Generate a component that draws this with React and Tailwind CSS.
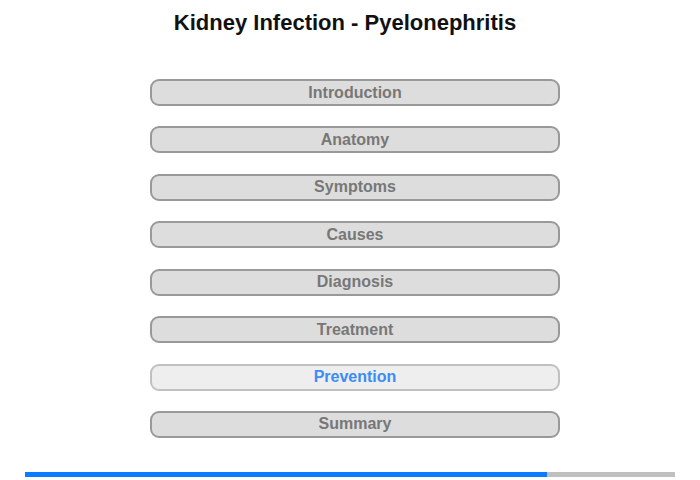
const SECTIONS = [
  'Introduction',
  'Anatomy',
  'Symptoms',
  'Causes',
  'Diagnosis',
  'Treatment',
  'Prevention',
  'Summary',
]

const ACTIVE = 'Prevention'

export default function App() {
  return (
    <div className="w-[700px] h-[480px] bg-white font-['Liberation_Sans',Arial,sans-serif] relative">
      <h1 className="pt-[9px] text-center text-[22px] font-bold text-[#111] leading-[28px] pr-[10px]">
        Kidney Infection - Pyelonephritis
      </h1>

      <div className="mt-[42px] flex flex-col items-center pl-[10px]">
        {SECTIONS.map((s) => {
          const active = s === ACTIVE
          return (
            <button
              key={s}
              className={
                active
                  ? 'w-[410px] h-[27px] mb-[20.43px] rounded-[9px] border-2 border-[#c0c0c0] bg-[#eeeeee] text-[16px] font-bold text-[#3b8cf5] leading-none'
                  : 'w-[410px] h-[27px] mb-[20.43px] rounded-[9px] border-2 border-[#999999] bg-[#dddddd] text-[16px] font-bold text-[#777777] leading-none'
              }
            >
              {s}
            </button>
          )
        })}
      </div>

      <div className="absolute left-[25px] top-[472px] w-[650px] h-[5px] bg-[#c0c0c0] flex">
        <div className="h-full bg-[#0a7cff]" style={{ width: '522px' }} />
      </div>
    </div>
  )
}
